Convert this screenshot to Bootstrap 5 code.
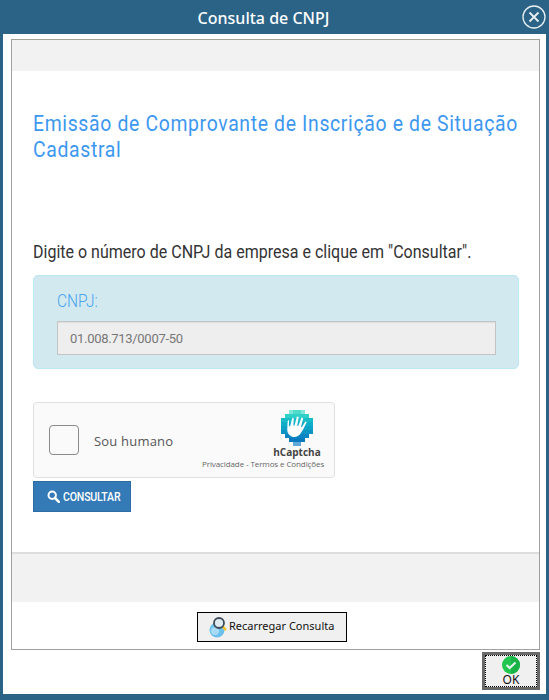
<!DOCTYPE html>
<html lang="pt-BR">
<head>
  <meta charset="UTF-8" />
  <meta name="viewport" content="width=device-width, initial-scale=1.0"/>
  <title>Consulta de CNPJ</title>
  <link href="https://cdn.jsdelivr.net/npm/bootstrap@5.3.0/dist/css/bootstrap.min.css" rel="stylesheet" />
  <style>
    html, body { height: 100%; background: #2b6387; overflow: hidden; }
    body { font-family: Roboto, sans-serif; color: #333; }
    .app-window { height: 697px; padding: 1px 3px 3px; background: #2b6387; }
    .title-bar { height: 33px; padding-right: 22px; color: #fff; font-family: "Noto Sans", sans-serif; font-size: 16px; font-weight: 500; }
    .close-x { position: absolute; right: 0; top: 4px; width: 24px; height: 24px; padding: 0; background: none; border: 0; line-height: 0; }
    .client { background: #fff; padding: 5px 6px 4px 8px; }
    .web-frame { height: 611px; border: 1px solid #a0a0a0; }
    .band-top { height: 31px; background: #f2f2f2; }
    .band-bottom { height: 50px; margin-top: 1px; background: #f2f2f2; border-top: 2px solid #ddd; }
    .page-body { padding: 40px 20px 0 21px; }
    .page-title { width: 560px; height: 52px; margin: 0; font-family: Roboto, sans-serif; font-size: 22px; font-weight: 400; line-height: 26px; letter-spacing: .75px; color: #3c97f0; transform: scaleX(.881); transform-origin: left; }
    .page-hint { margin: 78px 0 12px; font-size: 18px; line-height: 22px; color: #333; white-space: nowrap; transform: scaleX(.89); transform-origin: left; }
    .cnpj-box { height: 94px; padding: 15px 22px 0 23px; margin: 0; background: #d1e9ef; border-color: #bce8f1; border-radius: 5px; }
    .cnpj-label { display: block; margin: 0 0 10px; font-size: 18px; line-height: 20px; font-weight: 300; color: #4ba3ef; transform: scaleX(.86); transform-origin: left; }
    .cnpj-input { height: 34px; padding: 0 12px; border: 1px solid #c4c4c4; border-radius: 0; background: #eee; color: #777; font-size: 13px; letter-spacing: -.3px; box-shadow: inset 0 1px 1px rgba(0,0,0,.075); }
    .cnpj-input:disabled { background: #eee; }
    .captcha-box { width: 302px; height: 76px; margin-top: 33px; padding: 0 10px 0 15px; background: #fafafa; border: 1px solid #e0e0e0; border-radius: 4px; }
    .captcha-check { width: 30px; height: 30px; border: 1px solid #8a8a8a; border-radius: 4px; background: #fafafa; flex: none; }
    .captcha-text { margin-left: 15px; margin-top: 3px; font-family: "Open Sans", sans-serif; font-size: 13px; color: #555; letter-spacing: .2px; }
    .captcha-brand { margin-left: auto; width: 122px; padding-top: 7px; line-height: 1; }
    .captcha-mark { width: 54px; margin-left: auto; text-align: center; }
    .captcha-name { margin-top: 1px; font-family: "Open Sans", sans-serif; font-size: 10px; font-weight: 700; color: #444; }
    .captcha-links { margin-top: 3px; font-family: "Open Sans", sans-serif; font-size: 8px; letter-spacing: -.1px; color: #666; text-align: right; white-space: nowrap; }
    .btn-consult { display: flex; align-items: center; gap: 3px; width: 98px; height: 31px; margin-top: 3px; padding: 0 0 0 13px; background: #337ab7; border: 1px solid #2e6da4; border-radius: 0; color: #fff; font-size: 12px; font-weight: 500; }
    .btn-consult span { transform: scaleX(.88); transform-origin: left; letter-spacing: -.2px; }
    .reload-row { height: 47px; padding-top: 2px; padding-right: 7px; }
    .btn-reload { display: flex; align-items: center; width: 150px; height: 30px; padding: 0 0 0 11px; border: 1px solid #000; border-radius: 0; background: #f0f0f0; color: #111; font-family: "Noto Sans", sans-serif; font-size: 11px; }
    .btn-ok { width: 58px; height: 38px; margin-top: 2px; padding: 0; border: 3px solid #696969; border-radius: 0; background: #f0f0f0; }
    .btn-ok-inner { height: 100%; border: 1px dotted #000; color: #111; font-family: "Noto Sans", sans-serif; font-size: 12px; line-height: 12px; }
    .btn-ok-inner svg { flex: none; }
  </style>
</head>
<body>
  <div class="app-window d-flex flex-column">
    <div class="title-bar position-relative d-flex align-items-center justify-content-center">
      Consulta de CNPJ
      <button class="close-x" type="button" aria-label="Fechar">
        <svg width="24" height="24" viewBox="0 0 24 24" fill="none" stroke="#e8f0f4"><circle cx="12" cy="12" r="11" stroke-width="1.300"/><path d="M7.500 7.500l9 9M16.500 7.500l-9 9" stroke-width="1.800"/></svg>
      </button>
    </div>

    <div class="client flex-grow-1 d-flex flex-column">
      <div class="web-frame d-flex flex-column">
        <div class="band-top"></div>
        <div class="page-body flex-grow-1">
          <h1 class="page-title">Emissão de Comprovante de Inscrição e de Situação Cadastral</h1>
          <p class="page-hint">Digite o número de CNPJ da empresa e clique em "Consultar".</p>

          <div class="alert alert-info cnpj-box">
            <label class="cnpj-label" for="cnpj">CNPJ:</label>
            <input id="cnpj" class="form-control cnpj-input" type="text" value="01.008.713/0007-50" disabled />
          </div>

          <div class="captcha-box d-flex align-items-center">
            <div class="captcha-check"></div>
            <span class="captcha-text">Sou humano</span>
            <div class="captcha-brand align-self-start">
              <div class="captcha-mark">
                <svg width="32" height="36" viewBox="0 0 32 36" shape-rendering="crispEdges">
                  <rect x="8" y="0" width="16" height="4" fill="#7fe6da"/>
                  <rect x="12" y="0" width="8" height="4" fill="#4fdccb"/>
                  <rect x="4" y="4" width="24" height="4" fill="#2fd0c8"/>
                  <rect x="0" y="8" width="32" height="4" fill="#18bcc8"/>
                  <rect x="0" y="12" width="32" height="4" fill="#10aec8"/>
                  <rect x="0" y="16" width="32" height="4" fill="#0ea2c6"/>
                  <rect x="0" y="20" width="32" height="4" fill="#0c94c4"/>
                  <rect x="4" y="24" width="24" height="4" fill="#0b86c2"/>
                  <rect x="8" y="28" width="16" height="4" fill="#0a7abf"/>
                  <rect x="12" y="32" width="8" height="4" fill="#5fa8d8"/>
                  <path shape-rendering="auto" fill="#fff" transform="rotate(28 15 18)" d="M5 14l3 6 1-1-2-8 1.500-.5 3 6.500 1-.5-2-9 1.800-.5 2.700 8.500 1-.3-1-9 1.800-.2 2 8.500 1-.2.300-6.500 1.700.2.200 8-.5 6c-1 3.500-3.500 5.500-7 5.500-3.500 0-5-1.500-6.500-4L4.500 16z"/>
                </svg>
                <div class="captcha-name">hCaptcha</div>
              </div>
              <div class="captcha-links">Privacidade - Termos e Condições</div>
            </div>
          </div>

          <button class="btn btn-consult" type="button">
            <svg width="13" height="13" viewBox="0 0 13 13" fill="none" stroke="#fff"><circle cx="5.200" cy="5.200" r="3.700" stroke-width="2"/><path d="M8 8l3.800 3.800" stroke-width="2.600" stroke-linecap="round"/></svg>
            <span>CONSULTAR</span>
          </button>
        </div>
        <div class="band-bottom"></div>
        <div class="reload-row d-flex align-items-center justify-content-center">
          <button class="btn btn-reload" type="button">
            <svg width="20" height="22" viewBox="0 0 20 22"><circle cx="8" cy="14" r="7.500" fill="#6cc0ee"/><circle cx="6" cy="15" r="4" fill="#a8dcf6"/><path d="M13 10l4 4" stroke="#f2c230" stroke-width="2.500"/><circle cx="10" cy="7" r="5" fill="#dfeaf0" stroke="#3d4a57" stroke-width="1.800"/></svg>
            Recarregar Consulta
          </button>
        </div>
      </div>
      <div class="d-flex justify-content-end">
        <button class="btn btn-ok" type="button">
          <span class="btn-ok-inner d-flex flex-column align-items-center">
            <svg width="18" height="18" viewBox="0 0 18 18"><circle cx="9" cy="9" r="9" fill="#22c74f"/><path d="M9 0a9 9 0 0 1 0 18z" fill="#18b347"/><path d="M4.500 9l3.200 3 5.800-5.500" fill="none" stroke="#e4f2ea" stroke-width="2.200"/></svg>
            OK
          </span>
        </button>
      </div>
    </div>
  </div>
  <script src="https://cdn.jsdelivr.net/npm/bootstrap@5.3.0/dist/js/bootstrap.bundle.min.js"></script>
</body>
</html>
